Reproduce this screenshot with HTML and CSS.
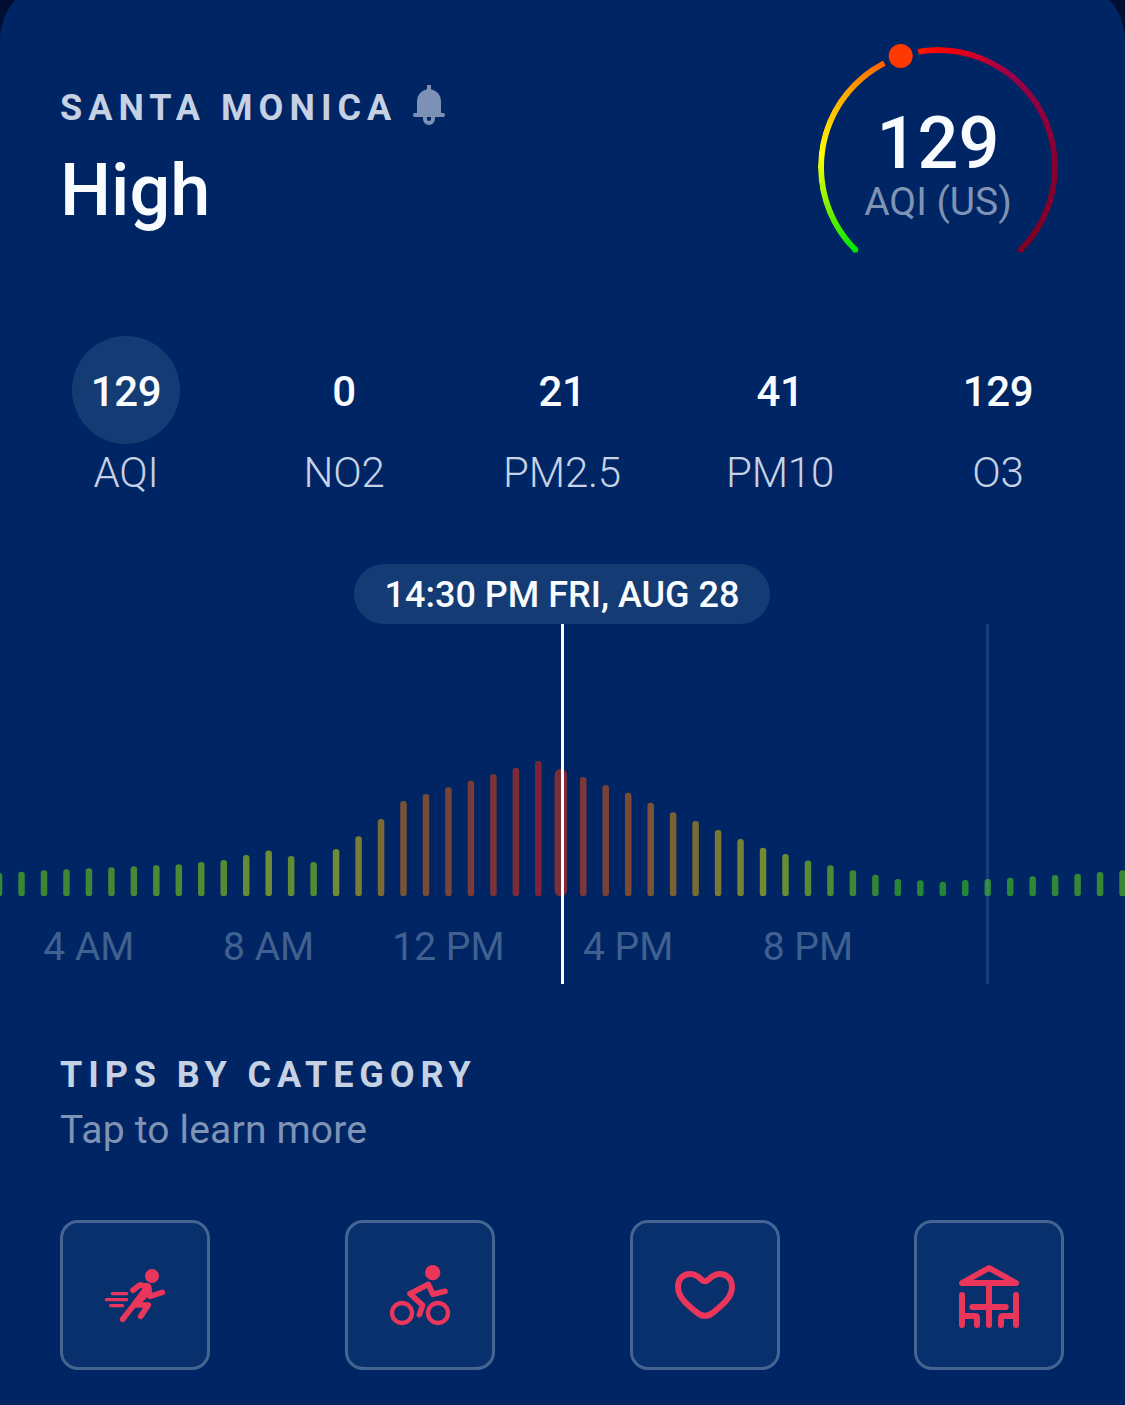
FILE: index.html
```html
<!DOCTYPE html>
<html lang="en">
<head>
<meta charset="utf-8">
<title>Air quality</title>
<link rel="stylesheet" href="styles.css">
</head>
<body>
<main class="sheet">
  <header class="header">
    <div class="place">
      <div class="place-row">
        <h2 class="eyebrow">SANTA MONICA</h2>
        <svg class="bell" viewBox="0 0 32 40" aria-hidden="true">
          <path fill-rule="evenodd" d="M14 0h4v4.200a12 12 0 0 1 10 11.800v12h2a2 2 0 0 1 0 4h-8v2a6 6 0 0 1-12 0v-2H2a2 2 0 0 1 0-4h2V16A12 12 0 0 1 14 4.200zM14 32v2a2 2 0 0 0 4 0v-2z"/>
        </svg>
      </div>
      <h1 class="level">High</h1>
    </div>
    <div class="gauge">
      <div class="gauge-ring"></div>
      <svg class="gauge-marks" viewBox="0 0 240 240" aria-hidden="true">
        <circle cx="37.300" cy="202.700" r="3" fill="#00e600"/>
        <circle cx="202.700" cy="202.700" r="3" fill="#7e0023"/>
        <circle cx="82.700" cy="9" r="12" fill="#ff3900"/>
      </svg>
      <div class="gauge-value">129</div>
      <div class="gauge-unit">AQI (US)</div>
    </div>
  </header>

  <section class="pollutants">
    <div class="pollutant active"><span class="amount">129</span><span class="name">AQI</span></div>
    <div class="pollutant"><span class="amount">0</span><span class="name">NO2</span></div>
    <div class="pollutant"><span class="amount">21</span><span class="name">PM2.5</span></div>
    <div class="pollutant"><span class="amount">41</span><span class="name">PM10</span></div>
    <div class="pollutant"><span class="amount">129</span><span class="name">O3</span></div>
  </section>

  <section class="timeline">
    <div class="stamp">14:30 PM FRI, AUG 28</div>
    <div class="chart">
      <svg class="bars" id="bars" viewBox="0 0 1125 272" aria-hidden="true"></svg>
      <div class="hours">
        <span>4 AM</span><span>8 AM</span><span>12 PM</span><span>4 PM</span><span>8 PM</span>
      </div>
      <div class="day-line"></div>
      <div class="now-line"></div>
    </div>
  </section>

  <section class="tips">
    <h2 class="eyebrow">TIPS BY CATEGORY</h2>
    <p class="hint">Tap to learn more</p>
    <div class="cards">
      <div class="card">
        <svg class="icon" viewBox="150 150 180 180" aria-label="Running">
          <circle class="solid" cx="291" cy="183" r="21"/>
          <path class="solid" d="M252 202L284 206L289 214L289 234L262 262L236 276L228 268L262 221z"/>
          <path stroke-width="17" d="M234 226L254 210L280 214L285 244L322 232M276 220L203 313M240 270H280L257 304"/>
          <path stroke-width="9.500" d="M172 236H215M154 254H215M167 272H203"/>
        </svg>
      </div>
      <div class="card">
        <svg class="icon" viewBox="150 150 180 180" aria-label="Cycling">
          <circle class="solid" cx="278" cy="173" r="23"/>
          <circle cx="186" cy="294" r="30" stroke-width="13"/>
          <circle cx="294" cy="294" r="30" stroke-width="13"/>
          <path stroke-width="17" d="M315 229L279 238L265 208L210 236L248 271L238 299"/>
        </svg>
      </div>
      <div class="card">
        <svg class="icon" viewBox="150 150 180 180" aria-label="Health">
          <path stroke-width="18" d="M240 199C226 199 224 177 195 177C175 177 159 192 159 215C159 246 185 268 215 292C232 306 248 306 265 292C295 268 321 246 321 215C321 192 305 177 285 177C256 177 254 199 240 199z"/>
        </svg>
      </div>
      <div class="card">
        <svg class="icon" viewBox="150 150 180 180" aria-label="Outdoor dining">
          <path stroke-width="18" d="M159 204L240 159L321 204zM240 204V330M190 276H290M159 240V330M159 303H198Q204 303 204 309V330M321 240V330M321 303H282Q276 303 276 309V330"/>
        </svg>
      </div>
    </div>
  </section>
</main>
<script src="chart.js"></script>
</body>
</html>
```
FILE: styles.css
```css
* {
  box-sizing: border-box;
  margin: 0;
}

html {
  background: #000f31;
}

body {
  height: 1405px;
  overflow: hidden;
  background: #000f31;
  color: #f9fcff;
  font-family: Roboto, "Liberation Sans", sans-serif;
}

.sheet {
  height: 1465px;
  margin-top: -20px;
  padding-top: 67px;
  border-radius: 60px 60px 0 0;
  background: #002564;
  overflow: hidden;
}

.header {
  display: flex;
  justify-content: space-between;
  height: 289px;
  padding: 0 67px 0 60px;
}

.place {
  padding-top: 38px;
}

.place-row {
  display: flex;
  align-items: flex-start;
  gap: 16px;
}

.eyebrow {
  color: #c6d2e4;
  font-size: 36px;
  font-weight: 700;
  line-height: 42px;
  letter-spacing: 5.900px;
  white-space: nowrap;
}

.place .eyebrow {
  margin-top: 2px;
  letter-spacing: 6.040px;
}

.bell {
  width: 32px;
  height: 40px;
  fill: #7d90b5;
}

.level {
  margin-top: 20px;
  font-size: 72px;
  font-weight: 500;
  line-height: 84px;
}

.gauge {
  position: relative;
  width: 240px;
  height: 240px;
  padding-top: 60px;
  text-align: center;
}

.gauge-ring,
.gauge-marks {
  position: absolute;
  inset: 0;
}

.gauge-marks {
  width: 240px;
  height: 240px;
  overflow: visible;
}

.gauge-ring {
  border-radius: 50%;
  background: conic-gradient(from 225deg,
    #00e600 0deg, #ffff00 51deg, #ff7e00 98deg, #ff6000 107.600deg,
    transparent 107.800deg, transparent 125.200deg,
    #ff1a00 125.400deg, #ff0000 135deg, #99004c 172deg, #8a0034 210deg,
    #7e0023 270deg, transparent 270.200deg);
  -webkit-mask: radial-gradient(closest-side, transparent 113.500px, #000 114.500px);
  mask: radial-gradient(closest-side, transparent 113.500px, #000 114.500px);
}

.gauge-value {
  font-size: 72px;
  font-weight: 500;
  line-height: 74px;
}

.gauge-unit {
  margin-top: 1px;
  color: #7f93b5;
  font-size: 39px;
  line-height: 40px;
}

.pollutants {
  display: grid;
  grid-template-columns: repeat(5, 218px);
  height: 228px;
  padding-left: 17px;
}

.pollutant {
  display: flex;
  flex-direction: column;
  align-items: center;
}

.amount {
  width: 108px;
  height: 108px;
  padding-top: 2px;
  border-radius: 50%;
  font-size: 42px;
  font-weight: 500;
  line-height: 108px;
  letter-spacing: -0.300px;
  text-align: center;
}

.active .amount {
  background: #143b73;
}

.name {
  margin-top: 4px;
  color: #c6d2e4;
  font-size: 42px;
  font-weight: 300;
  line-height: 50px;
  letter-spacing: -0.200px;
}

.stamp {
  width: 416px;
  height: 60px;
  margin: 0 auto 0 354px;
  padding-top: 1px;
  border-radius: 30px;
  background: #143b73;
  font-size: 36px;
  font-weight: 500;
  line-height: 60px;
  text-align: center;
  white-space: nowrap;
}

.chart {
  position: relative;
  height: 360px;
  overflow: hidden;
}

.bars {
  display: block;
  width: 1125px;
  height: 272px;
}

.hours {
  display: grid;
  grid-template-columns: repeat(5, 179.760px);
  margin: 28px 0 0 -1px;
  color: #40608f;
  font-size: 39px;
  line-height: 46px;
  text-align: center;
}

.day-line,
.now-line {
  position: absolute;
  top: 0;
  bottom: 0;
  left: 561px;
  width: 3px;
  background: #f9fcff;
}

.day-line {
  left: 986px;
  background: #7da5c830;
}

.tips {
  padding: 70px 60.600px 0 60px;
}

.hint {
  margin-top: 11px;
  color: #7f93b5;
  font-size: 39px;
  line-height: 46px;
  letter-spacing: 0.190px;
}

.cards {
  display: flex;
  justify-content: space-between;
  margin-top: 67px;
}

.card {
  display: grid;
  place-items: center;
  width: 150px;
  height: 150px;
  border: 3px solid #456492;
  border-radius: 18px;
  background: #08306c;
}

.icon {
  width: 60px;
  height: 60px;
  overflow: visible;
  fill: none;
  stroke: #eb365b;
  stroke-linecap: round;
  stroke-linejoin: round;
}

.icon .solid {
  fill: #eb365b;
  stroke: none;
}
```
FILE: chart.js
```js
// Half-hourly readings, as bar heights in pixels.
const readings = [
  23.3, 24.3, 25.7, 26.7, 27.7, 28.7, 29.7, 30.7, 31.7, 34, 36, 41, 45.5, 40, 34,
  47, 59.7, 77, 95, 102, 108.7, 115.3, 122, 128.3, 135, 127, 119, 111, 103.3, 93.3,
  83.7, 75, 66, 57, 48.3, 42, 35.5, 30.7, 25.7, 21.3, 17, 15.7, 14.3, 16, 17,
  18.3, 19.7, 21, 22.3, 24, 25.7
];
const current = 25;
const baseline = 272.3;
const pitch = 22.47;
const firstCentre = -0.95;

// Colour scale: [height, [r, g, b]]
const scale = [
  [14, [34, 134, 56]], [26, [60, 135, 54]], [34, [83, 138, 53]],
  [45, [112, 140, 53]], [60, [122, 126, 53]], [77, [122, 105, 52]],
  [95, [122, 82, 52]], [109, [122, 68, 52]], [122, [122, 52, 54]],
  [135, [125, 36, 56]]
];

function colourFor(h) {
  let i = 1;
  while (i < scale.length - 1 && h > scale[i][0]) i++;
  const [h0, a] = scale[i - 1];
  const [h1, b] = scale[i];
  const t = (h - h0) / (h1 - h0);
  return `rgb(${a.map((v, k) => Math.round(v + (b[k] - v) * t)).join(",")})`;
}

const bars = document.getElementById("bars");
readings.forEach((h, i) => {
  const width = i === current ? 12.4 : 6.5;
  const bar = document.createElementNS("http://www.w3.org/2000/svg", "rect");
  bar.setAttribute("x", firstCentre + i * pitch - width / 2);
  bar.setAttribute("y", baseline - h - 0.3);
  bar.setAttribute("width", width);
  bar.setAttribute("height", h + 0.3);
  bar.setAttribute("rx", i === current ? 6 : 3);
  bar.setAttribute("fill", colourFor(h));
  bars.append(bar);
});
```
